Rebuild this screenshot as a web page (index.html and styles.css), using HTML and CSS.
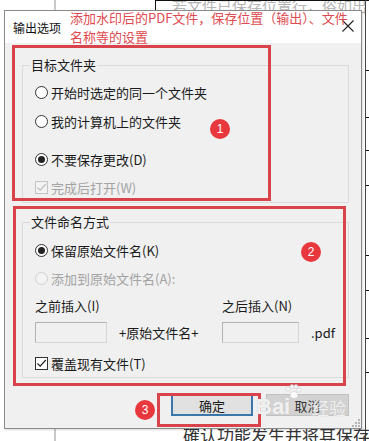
FILE: index.html
```html
<!DOCTYPE html>
<html lang="zh">
<head>
<meta charset="utf-8">
<link rel="stylesheet" href="styles.css">
</head>
<body>
<div class="bg-vline"></div>
<div class="bg-box"><span class="bg-faint">若文件已保存位置行，俗如出</span></div>
<div class="bg-right"><i style="top:70px"></i><i style="top:117px"></i><i style="top:150px"></i><i style="top:185px"></i><i style="top:255px"></i><i style="top:290px"></i><i style="top:338px"></i><i style="top:372px"></i></div>
<div class="bg-bottom-text">確认功能发生并将其保存的设置</div>

<div class="dialog">
  <div class="titlebar">
    <span class="title">输出选项</span>
    <svg class="close" width="12" height="12" viewBox="0 0 12 12"><path d="M0.5 0.5 L11.5 11.5 M11.5 0.5 L0.5 11.5" stroke="#222" stroke-width="1.1" fill="none"/></svg>
  </div>
  <div class="body">
    <div class="group g1">
      <span class="legend">目标文件夹</span>
      <div class="row"><span class="radio"></span>开始时选定的同一个文件夹</div>
      <div class="row r2"><span class="radio"></span>我的计算机上的文件夹</div>
      <div class="row r3"><span class="radio on"></span>不要保存更改(D)</div>
      <div class="row r4 dis"><span class="check dis"><svg width="11" height="11" viewBox="0 0 11 11"><path d="M1.5 5.5 L4.2 8.2 L9.8 2" stroke="#bdbdbd" stroke-width="1.2" fill="none"/></svg></span>完成后打开(W)</div>
    </div>
    <div class="group g2">
      <span class="legend">文件命名方式</span>
      <div class="row"><span class="radio on"></span>保留原始文件名(K)</div>
      <div class="row r2 dis"><span class="radio dis"></span>添加到原始文件名(A):</div>
      <div class="insert">
        <span class="lbl">之前插入(I)</span><span></span><span class="lbl">之后插入(N)</span><span></span>
        <span class="field f1"></span><span class="mid">+原始文件名+</span><span class="field f2"></span><span class="ext">.pdf</span>
      </div>
      <div class="row r5"><span class="check"><svg width="11" height="11" viewBox="0 0 11 11"><path d="M1.5 5.5 L4.2 8.2 L9.8 2" stroke="#222" stroke-width="1.2" fill="none"/></svg></span>覆盖现有文件(T)</div>
    </div>
    <div class="buttons">
      <span class="btn ok">确定</span>
      <span class="btn cancel">取消</span>
    </div>
  </div>
  <svg class="grip" width="8" height="8" viewBox="0 0 8 8"><g fill="#b5b5b5"><rect x="6" y="0" width="2" height="2"/><rect x="3" y="3" width="2" height="2"/><rect x="6" y="3" width="2" height="2"/><rect x="0" y="6" width="2" height="2"/><rect x="3" y="6" width="2" height="2"/><rect x="6" y="6" width="2" height="2"/></g></svg>
</div>

<div class="note">添加水印后的PDF文件，保存位置（输出）、文件<br>名称等的设置</div>
<div class="redbox b1"></div>
<div class="redbox b2"></div>
<div class="redbox b3"></div>
<span class="badge n1">1</span>
<span class="badge n2">2</span>
<span class="badge n3">3</span>
<div class="wm"><span class="wm-bai">Bai</span><svg class="paw" width="18" height="16" viewBox="0 0 18 16"><g fill="rgba(255,255,255,0.9)" stroke="#c8c8c8" stroke-width="0.6"><circle cx="4" cy="5" r="2"/><circle cx="8" cy="2.5" r="2"/><circle cx="12" cy="2.5" r="2"/><circle cx="15" cy="6" r="2"/><ellipse cx="10" cy="11" rx="4" ry="3.5"/></g></svg><span class="wm-jy">经验</span></div>
</body>
</html>
```

FILE: styles.css
```css
html, body {
  margin: 0;
  padding: 0;
}
body {
  box-sizing: border-box;
  width: 369px;
  height: 441px;
  padding: 10px 0 0 4px;
  overflow: hidden;
  position: relative;
  background: #fff;
  font-family: "Noto Sans CJK SC", "Noto Sans", sans-serif;
  color: #1a1a1a;
  font-size: 13px;
}

/* background page (behind the dialog) */
.bg-vline {
  position: absolute;
  left: 54px;
  top: 0;
  width: 2px;
  height: 441px;
  background: #c9c9c9;
  z-index: 0;
}
.bg-box {
  position: absolute;
  left: 155px;
  top: 0;
  width: 230px;
  height: 40px;
  border-left: 1px solid #111;
  border-top: 1px solid #111;
  overflow: hidden;
  z-index: 0;
}
.bg-faint {
  position: absolute;
  left: 16px;
  top: -5px;
  font-size: 15px;
  line-height: 20px;
  color: #b5b5b5;
  white-space: nowrap;
}
.bg-right {
  position: absolute;
  left: 365px;
  top: 0;
  width: 4px;
  height: 441px;
  border-left: 1px solid #444;
  z-index: 0;
}
.bg-right i {
  position: absolute;
  left: 0;
  width: 4px;
  height: 1px;
  background: #111;
}
.bg-bottom-text {
  position: absolute;
  left: 183px;
  top: 424px;
  font-size: 17px;
  line-height: 22px;
  color: #333;
  white-space: nowrap;
  z-index: 0;
}

/* dialog */
.dialog {
  position: relative;
  z-index: 1;
  width: 356px;
  height: 417px;
  border: 1px solid #8a8a8a;
  background: #f0f0f0;
  box-shadow: 1px 1px 2px rgba(0,0,0,0.15);
}
.titlebar {
  height: 32px;
  background: #fff;
  display: flex;
  align-items: center;
  justify-content: space-between;
  padding: 0 7px 0 8px;
}
.title {
  font-size: 12px;
  color: #111;
}
.close {
  margin-top: -3px;
}
.body {
  padding: 22px 12px 0 17px;
}
.group {
  position: relative;
  border: 1px solid #dadada;
}
.g1 {
  padding: 16px 0 5px 12px;
}
.g2 {
  margin-top: 19px;
  padding: 17px 0 4px 12px;
}
.legend {
  position: absolute;
  left: 7px;
  top: -11px;
  padding: 0 1px;
  background: #f0f0f0;
  line-height: 20px;
  font-size: 13px;
}
.row {
  height: 20px;
  display: flex;
  align-items: center;
  gap: 3px;
  white-space: nowrap;
}
.g1 .r2 { margin-top: 9px; }
.g1 .r3 { margin-top: 18px; }
.g1 .r4 { margin-top: 8px; }
.g2 .r2 { margin-top: 8px; }
.r5 { margin-top: 10px; }
.dis { color: #a3a3a3; }

.radio {
  box-sizing: border-box;
  width: 13px;
  height: 13px;
  border: 1px solid #333;
  border-radius: 50%;
  background: #fff;
  display: flex;
  align-items: center;
  justify-content: center;
}
.radio.on::after {
  content: "";
  width: 7px;
  height: 7px;
  border-radius: 50%;
  background: #222;
}
.radio.dis {
  border-color: #d0d0d0;
  background: #f3f3f3;
}
.check {
  box-sizing: border-box;
  width: 13px;
  height: 13px;
  border: 1px solid #333;
  background: #fff;
  display: flex;
  align-items: center;
  justify-content: center;
}
.check.dis {
  border-color: #c4c4c4;
  background: #f3f3f3;
}

.insert {
  margin-top: 7px;
  display: grid;
  grid-template-columns: 72px 115px 77px auto;
  grid-template-rows: 20px 21px;
  row-gap: 7px;
  align-items: center;
  white-space: nowrap;
}
.field {
  box-sizing: border-box;
  height: 21px;
  border: 1px solid #b3b3b3;
  border-right-color: #d6d6d6;
  border-bottom-color: #d6d6d6;
  background: #f0f0f0;
}
.mid { padding-left: 12px; }
.ext { padding-left: 12px; }

.buttons {
  margin-top: 16px;
  display: flex;
  justify-content: flex-end;
  gap: 13px;
}
.btn {
  box-sizing: border-box;
  height: 22px;
  display: flex;
  align-items: center;
  justify-content: center;
  font-size: 13px;
}
.ok {
  width: 82px;
  background: #e1e1e1;
  border: 2px solid #3b77ab;
}
.cancel {
  width: 83px;
  background: #d2d2d2;
  border: 1px solid #c0c0c0;
  color: #333;
}
.grip {
  position: absolute;
  right: 1px;
  bottom: 1px;
}

/* annotations */
.note, .redbox, .badge, .wm { z-index: 2; }
.note {
  position: absolute;
  left: 70px;
  top: 8px;
  font-size: 13px;
  line-height: 19px;
  color: #de4a4f;
  white-space: nowrap;
}
.redbox {
  position: absolute;
  box-sizing: border-box;
  border: 3px solid #d9434b;
}
.b1 { left: 12px; top: 45px; width: 259px; height: 156px; }
.b2 { left: 13px; top: 206px; width: 333px; height: 180px; }
.b3 { left: 157px; top: 393px; width: 104px; height: 34px; }
.badge {
  position: absolute;
  width: 20px;
  height: 20px;
  border-radius: 50%;
  background: #e8383d;
  color: #fff;
  font-family: "Liberation Sans", sans-serif;
  font-size: 12px;
  line-height: 20px;
  text-align: center;
}
.n1 { left: 210px; top: 119px; }
.n2 { left: 301px; top: 242px; }
.n3 { left: 135px; top: 400px; }

.wm {
  position: absolute;
  left: 254px;
  top: 384px;
  width: 110px;
  height: 40px;
  pointer-events: none;
}
.wm-bai {
  position: absolute;
  left: 2px;
  top: 10px;
  font-family: "Liberation Sans", sans-serif;
  font-weight: bold;
  font-size: 22px;
  line-height: 26px;
  color: rgba(255,255,255,0.8);
  text-shadow: 0 0 1px #bdbdbd;
}
.paw {
  position: absolute;
  left: 30px;
  top: 0;
}
.wm-jy {
  position: absolute;
  left: 58px;
  top: 13px;
  font-size: 17px;
  line-height: 22px;
  color: rgba(255,255,255,0.75);
  text-shadow: 0 0 1px #c4c4c4;
}
```
